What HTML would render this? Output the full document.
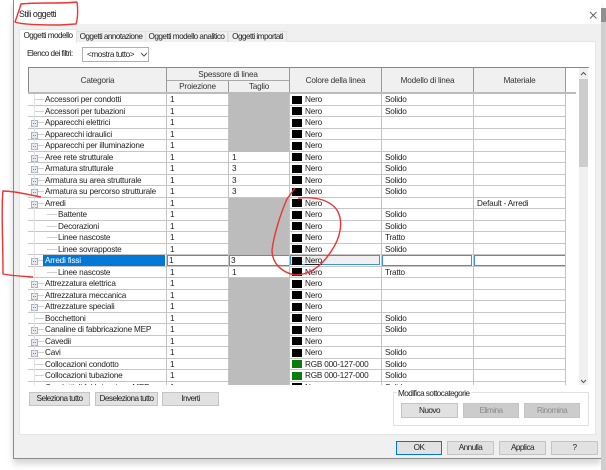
<!DOCTYPE html>
<html><head><meta charset="utf-8"><style>
html,body{margin:0;padding:0;background:#fff}
body{width:606px;height:470px;overflow:hidden;position:relative;font:8.2px/11px "Liberation Sans",sans-serif;letter-spacing:-.2px;color:#222;white-space:nowrap}
#w{position:absolute;inset:0;filter:blur(.35px)}
.a{position:absolute}
.nr{letter-spacing:-.55px}
#dlg{left:13px;top:0;width:588px;height:459px;background:#f0f0f0;border-left:1px solid #8a8a8a;border-bottom:1px solid #8a8a8a;box-sizing:border-box;box-shadow:0 5px 6px rgba(0,0,0,.16)}
.tab{position:absolute;top:31px;height:10px;line-height:10px;background:#f0f0f0;border:1px solid #e2e2e2;border-bottom:0;text-align:center;box-sizing:content-box;letter-spacing:-.55px}
.btn{position:absolute;box-sizing:border-box;background:#e1e1e1;border:1px solid #c4c4c4;text-align:center;line-height:12px;letter-spacing:-.55px}
.dis{background:#ccc;color:#8a8a8a;border-color:#c4c4c4}
.h{position:absolute;background:#f0f0f0;text-align:center;box-sizing:border-box;border-right:1px solid #999;border-bottom:1px solid #aaa;color:#333}
#clip{left:28px;top:94px;width:538px;height:291px;overflow:hidden;background:#fff}
.r{position:absolute;left:0;width:538px;height:11.5px;border-bottom:1px solid #c6c6c6;box-sizing:border-box;white-space:nowrap}
.r span,.r i,.r b{position:absolute;top:0;font-style:normal;font-weight:normal}
.t{left:17px}.s{left:30px}.p{left:142px}.q{left:204px}.n{left:277px}.m{left:357px}.d{left:449px}
.g{left:138px;width:62px;height:12px;background:#bcbcbc;top:0}
b.g{left:200px;width:61px}
i.k{left:264px;width:10px;height:8px;top:1.5px;background:#000}
i.kg{left:264px;width:10px;height:8px;top:1.5px;background:#0a7d0a}
.v{position:absolute;top:0;width:1px;height:291px;background:#c4c4c4}
.e{position:absolute;left:3px;top:3px;width:5px;height:5px;border:1px solid #a9b2c0;background:linear-gradient(#7d8796,#7d8796) center/3px 1px no-repeat,linear-gradient(#7d8796,#7d8796) center/1px 3px no-repeat,#e8edf3}
.e.mn{background:linear-gradient(#7d8796,#7d8796) center/3px 1px no-repeat,#e8edf3}
.l{position:absolute;height:1px;background:#d0d0d0;top:5px}
</style></head><body><div id="w">
<div class="a" id="dlg"></div>
<div class="a" style="left:601px;top:8px;width:5px;height:462px;background:#cfcfcf"></div>
<div class="a" style="left:601px;top:8px;width:5px;height:14px;background:#8f8f8f"></div>
<div class="a" style="left:14px;top:0;width:587px;height:24px;background:#fff"></div>
<div class="a" style="left:19px;top:9px;font-size:8.8px;letter-spacing:-.45px">Stili oggetti</div>
<svg class="a" style="left:589px;top:11px" width="9" height="9"><path d="M1 1L7.500 7.500M7.500 1L1 7.500" stroke="#666" stroke-width="1" fill="none"/></svg>
<div class="a" style="left:19px;top:41px;width:577px;height:394px;background:#fff;border:1px solid #e6e6e6;box-sizing:border-box"></div>
<div class="tab" style="left:19px;top:29px;width:56px;height:13px;background:#fff;line-height:12px;border-color:#e6e6e6">Oggetti modello</div>
<div class="tab" style="left:76px;width:68px">Oggetti annotazione</div>
<div class="tab" style="left:145px;width:81px">Oggetti modello analitico</div>
<div class="tab" style="left:228px;width:57px">Oggetti importati</div>
<div class="a nr" style="left:27px;top:48px">Elenco dei filtri:</div>
<div class="a" style="left:82px;top:47px;width:67px;height:15px;border:1px solid #b0b0b0;box-sizing:border-box;line-height:14px;padding-left:4px;letter-spacing:-.4px">&lt;mostra tutto&gt;</div>
<svg class="a" style="left:140px;top:52px" width="8" height="6"><path d="M1 1L4 4L7 1" stroke="#555" fill="none"/></svg>

<div class="a" style="left:28px;top:67px;width:561px;height:318px;background:#fff"></div>
<div class="h" style="left:28px;top:67px;width:139px;height:27px;line-height:25px;border-top:1px solid #888;border-left:1px solid #888">Categoria</div>
<div class="h" style="left:167px;top:67px;width:123px;height:14px;line-height:13px;border-top:1px solid #888">Spessore di linea</div>
<div class="h" style="left:167px;top:81px;width:62px;height:13px;line-height:12px">Proiezione</div>
<div class="h" style="left:229px;top:81px;width:61px;height:13px;line-height:12px">Taglio</div>
<div class="h" style="left:290px;top:67px;width:92px;height:27px;line-height:25px;border-top:1px solid #888">Colore della linea</div>
<div class="h" style="left:382px;top:67px;width:92px;height:27px;line-height:25px;border-top:1px solid #888">Modello di linea</div>
<div class="h" style="left:474px;top:67px;width:92px;height:27px;line-height:25px;border-top:1px solid #888">Materiale</div>
<div class="a" style="left:566px;top:67px;width:23px;height:1px;background:#888"></div>
<div class="a" style="left:28px;top:92px;width:548px;height:2px;background:#bbb"></div>
<div class="a" style="left:579px;top:68px;width:9px;height:317px;background:#f0f0f0"></div>
<div class="a" style="left:579px;top:79px;width:9px;height:88px;background:#cdcdcd"></div>
<svg class="a" style="left:580px;top:71px" width="7" height="5"><path d="M1 4L3.500 1.500L6 4" stroke="#555" fill="none"/></svg>
<svg class="a" style="left:580px;top:379px" width="7" height="5"><path d="M1 1L3.500 3.500L6 1" stroke="#555" fill="none"/></svg>
<div class="a" style="left:28px;top:94px;width:1px;height:291px;background:#888"></div>

<div class="a" id="clip">
<div class="r" style="top:0"><u class="l" style="left:6px;width:10px"></u><span class="t">Accessori per condotti</span><span class="p">1</span><b class="g"></b><i class="k"></i><span class="n">Nero</span><span class="m">Solido</span></div>
<div class="r" style="top:11.5px"><u class="l" style="left:6px;width:10px"></u><span class="t">Accessori per tubazioni</span><span class="p">1</span><b class="g"></b><i class="k"></i><span class="n">Nero</span><span class="m">Solido</span></div>
<div class="r" style="top:23px"><u class="l" style="left:9px;width:7px"></u><u class="e"></u><span class="t">Apparecchi elettrici</span><span class="p">1</span><b class="g"></b><i class="k"></i><span class="n">Nero</span></div>
<div class="r" style="top:34.500px"><u class="l" style="left:9px;width:7px"></u><u class="e"></u><span class="t">Apparecchi idraulici</span><span class="p">1</span><b class="g"></b><i class="k"></i><span class="n">Nero</span></div>
<div class="r" style="top:46px"><u class="l" style="left:9px;width:7px"></u><u class="e"></u><span class="t">Apparecchi per illuminazione</span><span class="p">1</span><b class="g"></b><i class="k"></i><span class="n">Nero</span></div>
<div class="r" style="top:57.500px"><u class="l" style="left:9px;width:7px"></u><u class="e"></u><span class="t">Aree rete strutturale</span><span class="p">1</span><span class="q">1</span><i class="k"></i><span class="n">Nero</span><span class="m">Solido</span></div>
<div class="r" style="top:69px"><u class="l" style="left:9px;width:7px"></u><u class="e"></u><span class="t">Armatura strutturale</span><span class="p">1</span><span class="q">3</span><i class="k"></i><span class="n">Nero</span><span class="m">Solido</span></div>
<div class="r" style="top:80.500px"><u class="l" style="left:9px;width:7px"></u><u class="e"></u><span class="t">Armatura su area strutturale</span><span class="p">1</span><span class="q">3</span><i class="k"></i><span class="n">Nero</span><span class="m">Solido</span></div>
<div class="r" style="top:92px"><u class="l" style="left:9px;width:7px"></u><u class="e"></u><span class="t">Armatura su percorso strutturale</span><span class="p">1</span><span class="q">3</span><i class="k"></i><span class="n">Nero</span><span class="m">Solido</span></div>
<div class="r" style="top:103.500px"><u class="l" style="left:9px;width:7px"></u><u class="e mn"></u><span class="t">Arredi</span><span class="p">1</span><b class="g"></b><i class="k"></i><span class="n">Nero</span><span class="d">Default - Arredi</span></div>
<div class="r" style="top:115px"><u class="l" style="left:19px;width:10px"></u><span class="s">Battente</span><span class="p">1</span><b class="g"></b><i class="k"></i><span class="n">Nero</span><span class="m">Solido</span></div>
<div class="r" style="top:126.500px"><u class="l" style="left:19px;width:10px"></u><span class="s">Decorazioni</span><span class="p">1</span><b class="g"></b><i class="k"></i><span class="n">Nero</span><span class="m">Solido</span></div>
<div class="r" style="top:138px"><u class="l" style="left:19px;width:10px"></u><span class="s">Linee nascoste</span><span class="p">1</span><b class="g"></b><i class="k"></i><span class="n">Nero</span><span class="m">Tratto</span></div>
<div class="r" style="top:149.500px"><u class="l" style="left:19px;width:10px"></u><span class="s">Linee sovrapposte</span><span class="p">1</span><b class="g"></b><i class="k"></i><span class="n">Nero</span><span class="m">Solido</span></div>
<div class="r" style="top:161px"><u class="l" style="left:9px;width:7px"></u><u class="e mn"></u><span class="t" style="left:15px;width:122px;height:11px;background:#0078d7;color:#fff;padding-left:2px;box-sizing:border-box">Arredi fissi</span><span class="p" style="left:139px;width:60px;height:9px;border:1px solid #3d94d8;background:#fff;line-height:9px;padding-left:1px">1</span><span class="q" style="left:201px;width:58px;height:9px;border:1px solid #3d94d8;background:#fff;line-height:9px;padding-left:1px">3</span><span style="left:262px;width:90px;height:10px;border:1px solid #3d94d8;background:#f0f0f0;box-sizing:border-box"></span><i class="k"></i><span class="n" style="text-decoration:underline">Nero</span><span style="left:354px;width:88px;height:9px;border:1px solid #3d94d8;background:#fff"></span><span style="left:446px;width:90px;height:9px;border:1px solid #3d94d8;background:#fff"></span></div>
<div class="r" style="top:172.500px"><u class="l" style="left:19px;width:10px"></u><span class="s">Linee nascoste</span><span class="p">1</span><span class="q">1</span><i class="k"></i><span class="n">Nero</span><span class="m">Tratto</span></div>
<div class="r" style="top:184px"><u class="l" style="left:9px;width:7px"></u><u class="e"></u><span class="t">Attrezzatura elettrica</span><span class="p">1</span><b class="g"></b><i class="k"></i><span class="n">Nero</span></div>
<div class="r" style="top:195.500px"><u class="l" style="left:9px;width:7px"></u><u class="e"></u><span class="t">Attrezzatura meccanica</span><span class="p">1</span><b class="g"></b><i class="k"></i><span class="n">Nero</span></div>
<div class="r" style="top:207px"><u class="l" style="left:9px;width:7px"></u><u class="e"></u><span class="t">Attrezzature speciali</span><span class="p">1</span><b class="g"></b><i class="k"></i><span class="n">Nero</span></div>
<div class="r" style="top:218.500px"><u class="l" style="left:6px;width:10px"></u><span class="t">Bocchettoni</span><span class="p">1</span><b class="g"></b><i class="k"></i><span class="n">Nero</span><span class="m">Solido</span></div>
<div class="r" style="top:230px"><u class="l" style="left:9px;width:7px"></u><u class="e"></u><span class="t">Canaline di fabbricazione MEP</span><span class="p">1</span><b class="g"></b><i class="k"></i><span class="n">Nero</span><span class="m">Solido</span></div>
<div class="r" style="top:241.500px"><u class="l" style="left:9px;width:7px"></u><u class="e"></u><span class="t">Cavedii</span><span class="p">1</span><b class="g"></b><i class="k"></i><span class="n">Nero</span></div>
<div class="r" style="top:253px"><u class="l" style="left:9px;width:7px"></u><u class="e"></u><span class="t">Cavi</span><span class="p">1</span><b class="g"></b><i class="k"></i><span class="n">Nero</span><span class="m">Solido</span></div>
<div class="r" style="top:264.500px"><u class="l" style="left:6px;width:10px"></u><span class="t">Collocazioni condotto</span><span class="p">1</span><b class="g"></b><i class="kg"></i><span class="n">RGB 000-127-000</span><span class="m">Solido</span></div>
<div class="r" style="top:276px"><u class="l" style="left:6px;width:10px"></u><span class="t">Collocazioni tubazione</span><span class="p">1</span><b class="g"></b><i class="kg"></i><span class="n">RGB 000-127-000</span><span class="m">Solido</span></div>
<div class="r" style="top:287.500px"><u class="l" style="left:6px;width:10px"></u><span class="t">Condotti di fabbricazione MEP</span><span class="p">1</span><b class="g"></b><i class="k"></i><span class="n">Nero</span><span class="m">Solido</span></div>
<div class="v" style="left:6px;background:#e2e2e2"></div>
<div class="v" style="left:138px"></div><div class="v" style="left:200px"></div><div class="v" style="left:261px"></div><div class="v" style="left:353px"></div><div class="v" style="left:445px"></div><div class="v" style="left:537px"></div>
</div>

<div class="btn" style="left:29px;top:392px;width:61px;height:14px">Seleziona tutto</div>
<div class="btn" style="left:95px;top:392px;width:63px;height:14px">Deseleziona tutto</div>
<div class="btn" style="left:162px;top:392px;width:57px;height:14px">Inverti</div>
<div class="a" style="left:393px;top:392px;width:196px;height:34px;border:1px solid #e0e0e0;box-sizing:border-box"></div>
<div class="a nr" style="left:397px;top:388px;background:#fff;padding:0 1px">Modifica sottocategorie</div>
<div class="btn" style="left:401px;top:403px;width:57px;height:15px;line-height:13px">Nuovo</div>
<div class="btn dis" style="left:463px;top:403px;width:56px;height:15px;line-height:13px">Elimina</div>
<div class="btn dis" style="left:524px;top:403px;width:56px;height:15px;line-height:13px">Rinomina</div>
<div class="btn" style="left:396px;top:441px;width:46px;height:14px;border-color:#0078d7">OK</div>
<div class="btn" style="left:447px;top:441px;width:47px;height:14px">Annulla</div>
<div class="btn" style="left:499px;top:441px;width:47px;height:14px">Applica</div>
<div class="btn" style="left:551px;top:441px;width:47px;height:14px">?</div>

<svg class="a" style="left:0;top:0" width="606" height="470" fill="none" stroke="#ee3333" stroke-width="1.400">
<path d="M77 2C60 4 40 2 21 4C19 11 17 16 15 22C22 25 50 25 60 25L76 24C78 18 78 8 77 2"/>
<path d="M41 197C30 195 15 191 3 191C1 205 3 240 3 274C12 276 22 276 33 277"/>
<path d="M295 188L287 199C280 215 274 235 272 250C272 262 280 272 295 275C310 275 322 266 332 250C340 238 344 222 337 210C328 198 312 197 298 198"/>
</svg>
</div></body></html>
